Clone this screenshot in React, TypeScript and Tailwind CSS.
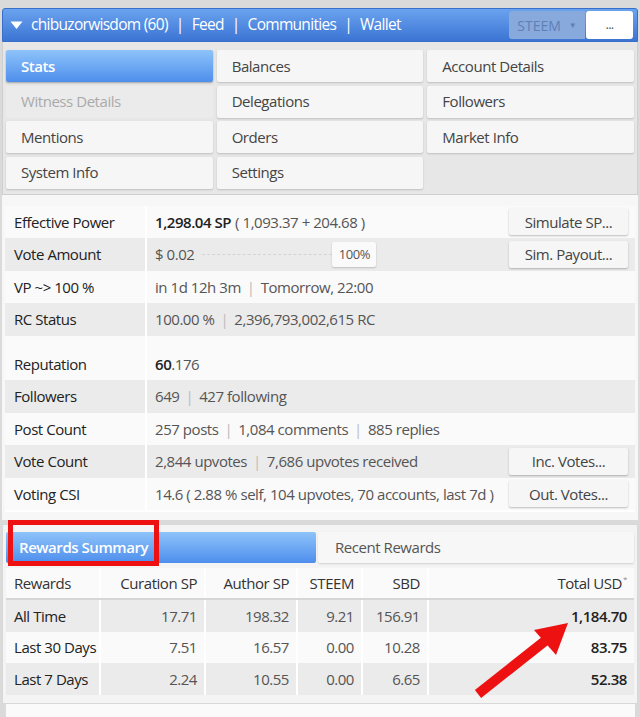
import React from "react";

const tabs = [
  { label: "Stats", active: true },
  { label: "Balances" },
  { label: "Account Details" },
  { label: "Witness Details", disabled: true },
  { label: "Delegations" },
  { label: "Followers" },
  { label: "Mentions" },
  { label: "Orders" },
  { label: "Market Info" },
  { label: "System Info" },
  { label: "Settings" },
];

const Sep = () => <span className="mx-[6px] text-[#bbb]">|</span>;

const Btn = ({ children }: { children: React.ReactNode }) => (
  <div className="flex h-[27px] w-[119px] shrink-0 items-center justify-center rounded-[2px] bg-[#f6f6f6] text-[#444] shadow-[0_1px_2px_rgba(0,0,0,0.25)]">
    {children}
  </div>
);

type Row = { label: string; value: React.ReactNode; button?: string };

const statsA: Row[] = [
  {
    label: "Effective Power",
    value: (
      <>
        <span className="font-semibold text-[#222]">1,298.04 SP</span>
        <span className="ml-[4px]">( 1,093.37 + 204.68 )</span>
      </>
    ),
    button: "Simulate SP...",
  },
  {
    label: "Vote Amount",
    value: (
      <div className="flex items-center">
        <span>$ 0.02</span>
        <div className="ml-[8px] h-0 w-[130px] border-t border-dashed border-[#d4d4d4]" />
        <div className="flex h-[25px] w-[44px] items-center justify-center rounded-[2px] bg-[#fafafa] text-[13px] shadow-[0_1px_2px_rgba(0,0,0,0.2)]">
          100%
        </div>
      </div>
    ),
    button: "Sim. Payout...",
  },
  {
    label: "VP ~> 100 %",
    value: (
      <>
        in 1d 12h 3m
        <Sep />
        Tomorrow, 22:00
      </>
    ),
  },
  {
    label: "RC Status",
    value: (
      <>
        100.00 %
        <Sep />
        2,396,793,002,615 RC
      </>
    ),
  },
];

const statsB: Row[] = [
  {
    label: "Reputation",
    value: (
      <>
        <span className="font-semibold text-[#222]">60</span>.176
      </>
    ),
  },
  {
    label: "Followers",
    value: (
      <>
        649
        <Sep />
        427 following
      </>
    ),
  },
  {
    label: "Post Count",
    value: (
      <>
        257 posts
        <Sep />
        1,084 comments
        <Sep />
        885 replies
      </>
    ),
  },
  {
    label: "Vote Count",
    value: (
      <>
        2,844 upvotes
        <Sep />
        7,686 upvotes received
      </>
    ),
    button: "Inc. Votes...",
  },
  {
    label: "Voting CSI",
    value: "14.6 ( 2.88 % self, 104 upvotes, 70 accounts, last 7d )",
    button: "Out. Votes...",
  },
];

const StatRows = ({ rows }: { rows: Row[] }) => (
  <>
    {rows.map((r, i) => (
      <div
        key={r.label}
        className={`flex h-[32.5px] items-center ${i % 2 ? "bg-[#ebebeb]" : "bg-[#fafafa]"}`}
      >
        <div className="flex h-full w-[142px] shrink-0 items-center border-r-2 border-white pl-[9px] text-[#222]">
          {r.label}
        </div>
        <div className="flex h-full flex-1 items-center pl-[8px] text-[#555]">
          {r.value}
        </div>
        {r.button && (
          <div className="pr-[7px]">
            <Btn>{r.button}</Btn>
          </div>
        )}
      </div>
    ))}
  </>
);

const rewardRows = [
  ["All Time", "17.71", "198.32", "9.21", "156.91", "1,184.70"],
  ["Last 30 Days", "7.51", "16.57", "0.00", "10.28", "83.75"],
  ["Last 7 Days", "2.24", "10.55", "0.00", "6.65", "52.38"],
];

const colW = ["w-[95px]", "w-[105px]", "w-[92px]", "w-[65px]", "w-[66px]", "flex-1"];

export default function App() {
  return (
    <div
      className="relative h-[717px] w-[640px] overflow-hidden bg-[#dadada] text-[15px] tracking-[-0.45px]"
      style={{ fontFamily: '"Open Sans", "Noto Sans", sans-serif' }}
    >
      <div className="h-[8px]" />
      {/* header */}
      <div className="mx-[2px] flex h-[34px] items-center rounded-t-[3px] border border-[#3a6fc9] bg-gradient-to-b from-[#6aa3ee] to-[#3c74d4] pl-[7px] pr-[4px] text-[15.5px] tracking-[-0.7px] text-white">
        <svg width="13" height="10" viewBox="0 0 13 10" className="mr-[8px]">
          <path d="M0.5 1.5 L12.5 1.5 L6.5 9 Z" fill="white" />
        </svg>
        <span>chibuzorwisdom (60)</span>
        <span className="mx-[8px]">|</span>
        <span>Feed</span>
        <span className="mx-[8px]">|</span>
        <span>Communities</span>
        <span className="mx-[8px]">|</span>
        <span>Wallet</span>
        <div className="ml-auto flex h-[28px] w-[76px] items-center justify-center rounded-l-[3px] bg-[#88a9dc] text-[14px] tracking-normal text-[#5e80b5]">
          STEEM <span className="ml-[8px] text-[8px]">▼</span>
        </div>
        <div className="ml-[1px] flex h-[28px] w-[47px] items-center justify-center rounded-[3px] bg-white text-[13px] text-[#555]">
          ...
        </div>
      </div>

      {/* tabs */}
      <div className="mx-[2px] border-x border-b border-[#cfcfcf] bg-[#e7e7e7] px-[3px] pb-[5px] pt-[8px]">
        <div className="grid grid-cols-3 gap-x-[4px] gap-y-[3.5px]">
          {tabs.map((t) => (
            <div
              key={t.label}
              className={`flex h-[32px] items-center rounded-[2px] pl-[15px] ${
                t.active
                  ? "bg-gradient-to-b from-[#8ec3f9] to-[#4e8eec] font-semibold text-white shadow-[0_1px_2px_rgba(0,0,0,0.3)]"
                  : t.disabled
                    ? "bg-[#ebebeb] text-[#aaa]"
                    : "bg-[#f6f6f6] text-[#444] shadow-[0_1px_2px_rgba(0,0,0,0.18)]"
              }`}
            >
              {t.label}
            </div>
          ))}
        </div>
      </div>

      {/* stats */}
      <div className="mx-[2px] bg-[#f7f7f7] px-[3px] pb-[8px] pt-[11px]">
        <div className="border-b-2 border-white">
          <StatRows rows={statsA} />
          <div className="flex h-[12px] bg-[#fafafa]">
            <div className="w-[142px] border-r-2 border-white" />
          </div>
          <StatRows rows={statsB} />
        </div>
      </div>

      {/* rewards */}
      <div className="mx-[2px] mt-[4px] border border-[#d8d8d8] bg-[#f4f4f4] px-[3px] pt-[7px] pb-[8px]">
        <div className="flex h-[31px] gap-[2px]">
          <div className="flex w-[310px] items-center rounded-[2px] bg-gradient-to-b from-[#8ec3f9] to-[#4e8eec] pl-[13px] font-semibold text-white">
            Rewards Summary
          </div>
          <div className="flex flex-1 items-center rounded-[2px] bg-[#f7f7f7] pl-[17px] text-[#555] shadow-[0_1px_2px_rgba(0,0,0,0.15)]">
            Recent Rewards
          </div>
        </div>
        <div className="mt-[5px] bg-[#fafafa]">
          <div className="flex h-[32px] border-b-2 border-[#d6d6d6] text-[#333]">
            {["Rewards", "Curation SP", "Author SP", "STEEM", "SBD", "Total USD"].map((h, i) => (
              <div
                key={h}
                className={`${colW[i]} flex items-center border-r-2 border-white last:border-r-0 ${
                  i === 0 ? "pl-[8px]" : "justify-end pr-[7px]"
                }`}
              >
                {h}
                {i === 5 && <sup className="ml-[1px] text-[8px] text-[#888]">*</sup>}
              </div>
            ))}
          </div>
          {rewardRows.map((r, ri) => (
            <div
              key={r[0]}
              className={`flex h-[31.5px] ${ri % 2 === 0 ? "bg-[#ebebeb]" : "bg-[#fafafa]"}`}
            >
              {r.map((c, i) => (
                <div
                  key={i}
                  className={`${colW[i]} flex items-center border-r-2 border-white last:border-r-0 ${
                    i === 0
                      ? "pl-[8px] text-[#222]"
                      : i === 5
                        ? "justify-end pr-[7px] font-semibold text-[#222]"
                        : "justify-end pr-[7px] text-[#555]"
                  }`}
                >
                  {c}
                </div>
              ))}
            </div>
          ))}
        </div>
      </div>
      <div className="mx-[5px] h-[40px] border-l border-[#ddd] bg-[#fafafa]" />

      {/* annotations */}
      <div className="pointer-events-none absolute left-[8px] top-[520px] h-[46px] w-[151px] border-[5px] border-[#ee1111]" />
      <svg
        className="pointer-events-none absolute left-0 top-0"
        width="640"
        height="717"
        viewBox="0 0 640 717"
      >
        <line x1="478" y1="694" x2="550" y2="637" stroke="#ee1111" strokeWidth="10" />
        <polygon points="568,623 534,630 556,655" fill="#ee1111" />
      </svg>
    </div>
  );
}
